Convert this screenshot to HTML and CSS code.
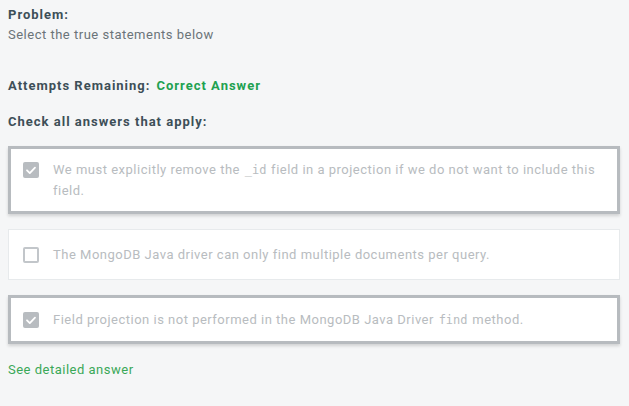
FILE: index.html
```html
<!DOCTYPE html>
<html>
<head>
<meta charset="utf-8">
<link rel="stylesheet" href="styles.css">
</head>
<body>
<div class="page">
  <div class="label">Problem:</div>
  <div class="desc">Select the true statements below</div>
  <div class="attempts"><span class="label">Attempts Remaining:</span> <span class="correct">Correct Answer</span></div>
  <div class="label check-all">Check all answers that apply:</div>
  <div class="options">
    <div class="option selected">
      <span class="box checked"><svg viewBox="0 0 16 16" width="16" height="16"><path d="M4 8.3l2.8 2.8L12 5.6" fill="none" stroke="#fff" stroke-width="1.8" stroke-linecap="round" stroke-linejoin="round"/></svg></span>
      <span class="text">We must explicitly remove the <code>_id</code> field in a projection if we do not want to include this field.</span>
    </div>
    <div class="option">
      <span class="box"></span>
      <span class="text">The MongoDB Java driver can only find multiple documents per query.</span>
    </div>
    <div class="option selected single">
      <span class="box checked"><svg viewBox="0 0 16 16" width="16" height="16"><path d="M4 8.3l2.8 2.8L12 5.6" fill="none" stroke="#fff" stroke-width="1.8" stroke-linecap="round" stroke-linejoin="round"/></svg></span>
      <span class="text">Field projection is not performed in the MongoDB Java Driver <code>find</code> method.</span>
    </div>
  </div>
  <a class="detail" href="#">See detailed answer</a>
</div>
</body>
</html>
```
FILE: styles.css
```css
html, body {
  margin: 0;
  padding: 0;
  background: #f5f6f7;
}
body {
  font-family: Roboto, "Liberation Sans", sans-serif;
  font-size: 13px;
  letter-spacing: 0.5px;
  color: #3d4f58;
}
.page {
  padding: 6px 9px 0 8px;
}
.label {
  font-weight: bold;
  color: #3d4f58;
  line-height: 18px;
  letter-spacing: 1px;
}
.desc {
  color: #6b7479;
  line-height: 20px;
  margin-top: 1px;
}
.attempts {
  margin-top: 32px;
  display: flex;
  gap: 6px;
  line-height: 18px;
}
.correct {
  color: #21a150;
  font-weight: bold;
  letter-spacing: 1px;
}
.check-all {
  margin-top: 18px;
}
.options {
  display: flex;
  flex-direction: column;
  gap: 15px;
  margin-top: 15px;
}
.option {
  display: flex;
  align-items: flex-start;
  background: #fff;
  border: 1px solid #e7eaec;
  padding: 14px 14px 14px 14px;
  color: #b8bcc0;
  line-height: 21px;
}
.option.selected {
  border: 3px solid #b7bbbf;
  padding: 10px 12px 10px 12px;
  box-shadow: 0 2px 3px rgba(0,0,0,0.15);
}
.option.single {
  padding-top: 11px;
  padding-bottom: 11px;
}
.box {
  flex: none;
  box-sizing: border-box;
  width: 16px;
  height: 16px;
  margin: 3px 14px 0 0;
  border: 2px solid #c2c6ca;
  border-radius: 2px;
  display: flex;
}
.box.checked {
  background: #b8bcc0;
  border: none;
  border-radius: 2px;
}
code {
  font-family: "DejaVu Sans Mono", "Liberation Mono", monospace;
  font-size: 12px;
  line-height: 1;
  letter-spacing: 0;
  padding: 0 1px;
}
.detail {
  display: block;
  margin-top: 17px;
  color: #3aa858;
  text-decoration: none;
  line-height: 18px;
}
```
